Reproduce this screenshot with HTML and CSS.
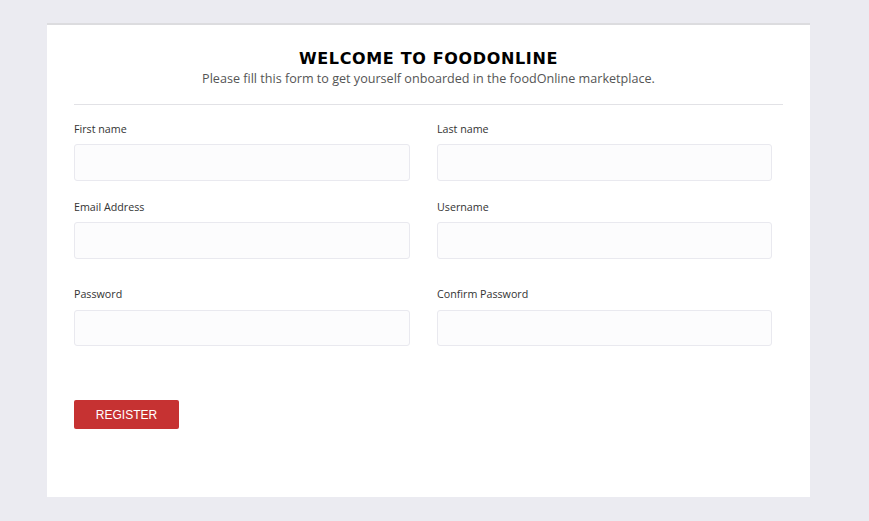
FILE: index.html
```html
<!DOCTYPE html>
<html lang="en">
<head>
<meta charset="utf-8">
<title>Register</title>
<link rel="stylesheet" href="styles.css">
</head>
<body>
<div class="page">
  <div class="card">
    <div class="header">
      <h2 class="title">WELCOME TO FOODONLINE</h2>
      <p class="subtitle">Please fill this form to get yourself onboarded in the foodOnline marketplace.</p>
    </div>
    <hr class="divider">
    <form class="form">
      <div class="grid">
        <div class="field">
          <label class="label">First name</label>
          <input class="input" type="text">
        </div>
        <div class="field">
          <label class="label">Last name</label>
          <input class="input" type="text">
        </div>
        <div class="field">
          <label class="label">Email Address</label>
          <input class="input" type="email">
        </div>
        <div class="field">
          <label class="label">Username</label>
          <input class="input" type="text">
        </div>
        <div class="field field-spaced">
          <label class="label">Password</label>
          <input class="input" type="password">
        </div>
        <div class="field field-spaced">
          <label class="label">Confirm Password</label>
          <input class="input" type="password">
        </div>
      </div>
      <button class="btn" type="button">REGISTER</button>
    </form>
  </div>
</div>
</body>
</html>
```
FILE: styles.css
```css
html, body {
  margin: 0;
  padding: 0;
  background: #ebebf1;
  font-family: "Open Sans", "Liberation Sans", sans-serif;
}
.page {
  padding-top: 23px;
  padding-left: 47px;
  height: 521px;
  box-sizing: border-box;
}
.card {
  width: 763px;
  height: 474px;
  box-sizing: border-box;
  background: #ffffff;
  border-top: 2px solid #dcdcdf;
  padding: 0 27px;
}
.header {
  text-align: center;
  padding-top: 24px;
}
.title {
  margin: 0;
  font-family: "DejaVu Sans", sans-serif;
  font-weight: bold;
  font-size: 16px;
  letter-spacing: 0.65px;
  line-height: 20px;
  color: #000;
}
.subtitle {
  margin: 0;
  font-size: 12.6px;
  line-height: 19px;
  color: #555;
}
.divider {
  margin: 16px 0 0;
  border: 0;
  border-top: 1px solid #e2e2e6;
}
.form {
  padding-top: 16px;
}
.grid {
  display: grid;
  grid-template-columns: 336px 335px;
  column-gap: 27px;
  row-gap: 18px;
}
.field {
  display: flex;
  flex-direction: column;
}
.field-spaced {
  padding-top: 9px;
}
.label {
  font-size: 10.7px;
  line-height: 16px;
  color: #333;
  margin-bottom: 7px;
}
.field-spaced .label {
  margin-bottom: 8px;
}
.input {
  margin: 0;
  height: 37px;
  box-sizing: border-box;
  border: 1px solid #e9e9ef;
  border-radius: 3px;
  background: #fcfcfd;
  outline: none;
}
.field-spaced .input {
  height: 36px;
}
.btn {
  display: block;
  margin-top: 54px;
  width: 105px;
  height: 29px;
  background: #c63232;
  color: #fff;
  border: 0;
  border-radius: 2px;
  font-family: "Liberation Sans", Arial, sans-serif;
  font-size: 12px;
  padding: 0;
}
```
